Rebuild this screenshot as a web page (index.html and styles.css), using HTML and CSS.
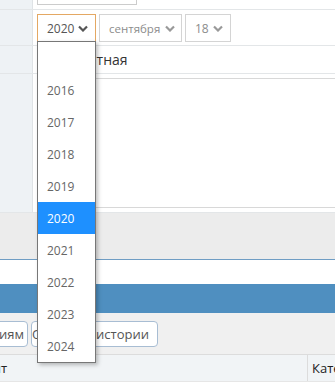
FILE: index.html
```html
<!DOCTYPE html>
<html lang="ru">
<head>
    <meta charset="UTF-8">
    <meta name="viewport" content="width=device-width, initial-scale=1.0">
    <title>Карточка</title>
    <link rel="stylesheet" href="styles.css">
</head>
<body>
    <div class="form">
        <div class="row row-top">
            <div class="label"></div>
            <div class="value"><div class="input-stub"></div></div>
        </div>
        <div class="row row-date">
            <div class="label"></div>
            <div class="value selects">
                <div class="select select-open">
                    <span>2020</span>
                    <svg class="chev" width="10" height="7" viewBox="0 0 10 7"><polyline points="1,1.5 5,5.5 9,1.5" fill="none" stroke="#555" stroke-width="2.2"/></svg>
                </div>
                <div class="select select-month">
                    <span>сентября</span>
                    <svg class="chev" width="10" height="7" viewBox="0 0 10 7"><polyline points="1,1.5 5,5.5 9,1.5" fill="none" stroke="#999" stroke-width="2.2"/></svg>
                </div>
                <div class="select select-day">
                    <span>18</span>
                    <svg class="chev" width="10" height="7" viewBox="0 0 10 7"><polyline points="1,1.5 5,5.5 9,1.5" fill="none" stroke="#999" stroke-width="2.2"/></svg>
                </div>

                <!-- открытый список годов -->
                <ul class="year-list">
                    <li></li>
                    <li>2016</li>
                    <li>2017</li>
                    <li>2018</li>
                    <li>2019</li>
                    <li class="active">2020</li>
                    <li>2021</li>
                    <li>2022</li>
                    <li>2023</li>
                    <li>2024</li>
                </ul>
            </div>
        </div>
        <div class="row row-type">
            <div class="label"></div>
            <div class="value type-text">Бесплатная</div>
        </div>
        <div class="row row-note">
            <div class="label"></div>
            <div class="value"><div class="textarea"></div></div>
        </div>
    </div>

    <div class="gray-band"></div>
    <div class="white-band"></div>
    <div class="blue-bar"></div>

    <div class="toolbar">
        <button type="button" class="tool-button tb-first">По категориям</button>
        <button type="button" class="tool-button tb-second">Очистить истории</button>
    </div>

    <div class="table-head">
        <div class="th th-first">Документ</div>
        <div class="th th-cat">Категория</div>
    </div>
</body>
</html>
```

FILE: styles.css
```css
body {
    margin: 0;
    font-family: "Open Sans", "Liberation Sans", sans-serif;
    font-size: 13px;
    color: #333;
    background: #fff;
    overflow: hidden;
}
.row {
    display: grid;
    grid-template-columns: 33px 1fr;
    border-bottom: 1px solid #e3e6e8;
}
.label {
    background-color: #eef2f5;
    border-right: 1px solid #dfe3e6;
}
.value {
    padding-left: 4px;
    min-width: 0;
}
.row-top {
    height: 9px;
}
.input-stub {
    width: 100px;
    height: 5px;
    border: 1px solid #ccc;
    border-top: none;
    box-sizing: border-box;
}
.row-date {
    height: 35px;
}
.selects {
    position: relative;
    display: flex;
    gap: 3px;
    padding-top: 4px;
}
.select {
    height: 28px;
    box-sizing: border-box;
    border: 1px solid #d4d4d4;
    display: flex;
    align-items: center;
    justify-content: space-between;
    padding: 0 7px 0 9px;
    font-size: 12px;
    color: #8c8c8c;
    background: #fff;
}
.select-open {
    width: 59px;
    border-color: #e4a863;
    color: #555;
}
.select-month {
    width: 83px;
    padding-right: 6px;
    font-size: 11.5px;
}
.select-day {
    width: 46px;
}
.chev {
    flex: none;
}
.year-list {
    position: absolute;
    left: 4px;
    top: 31px;
    width: 59px;
    margin: 0;
    padding: 0;
    list-style: none;
    background: #fff;
    border: 1px solid #777;
    box-sizing: border-box;
    box-shadow: 2px 2px 4px rgba(0, 0, 0, 0.25);
    z-index: 10;
}
.year-list li {
    height: 32px;
    line-height: 33px;
    padding-left: 9px;
    font-size: 12px;
    color: #666;
}
.year-list li.active {
    background-color: #1e90ff;
    color: #fff;
}
.row-type {
    height: 27px;
}
.type-text {
    line-height: 27px;
    padding-left: 16px;
    font-size: 14px;
    color: #333;
}
.row-note {
    height: 138px;
}
.textarea {
    margin-top: 4px;
    height: 130px;
    width: 320px;
    border: 1px solid #d8d8d8;
    box-sizing: border-box;
}
.gray-band {
    height: 46px;
    background-color: #ececec;
    border-bottom: 1px solid #6f9dc4;
}
.white-band {
    height: 24px;
}
.blue-bar {
    height: 29px;
    background-color: #4f8fc0;
}
.toolbar {
    display: flex;
    gap: 3px;
    height: 41px;
    padding-top: 8px;
    box-sizing: border-box;
    margin-left: -72px;
    background-color: #f0f0f0;
}
.tool-button {
    height: 26px;
    padding: 0 9px 0 0;
    border: 1px solid #a8bdd3;
    border-radius: 4px;
    background: #fff;
    color: #555;
    font-family: "Open Sans", "Liberation Sans", sans-serif;
    font-size: 13px;
    text-align: right;
    white-space: nowrap;
    overflow: hidden;
    cursor: pointer;
}
.tool-button.tb-first {
    width: 100px;
    padding-right: 3px;
}
.tool-button.tb-second {
    width: 127px;
}
.table-head {
    display: grid;
    grid-template-columns: 307px 1fr;
    height: 26px;
    border-top: 1px solid #dcdcdc;
    border-bottom: 1px solid #e6e6e6;
    background-color: #f1f4f6;
}
.th {
    line-height: 26px;
    font-size: 13px;
    color: #222;
    white-space: nowrap;
    overflow: hidden;
}
.th-first {
    text-indent: -54px;
}
.th-cat {
    padding-left: 4px;
    border-left: 1px solid #dcdcdc;
}
```
